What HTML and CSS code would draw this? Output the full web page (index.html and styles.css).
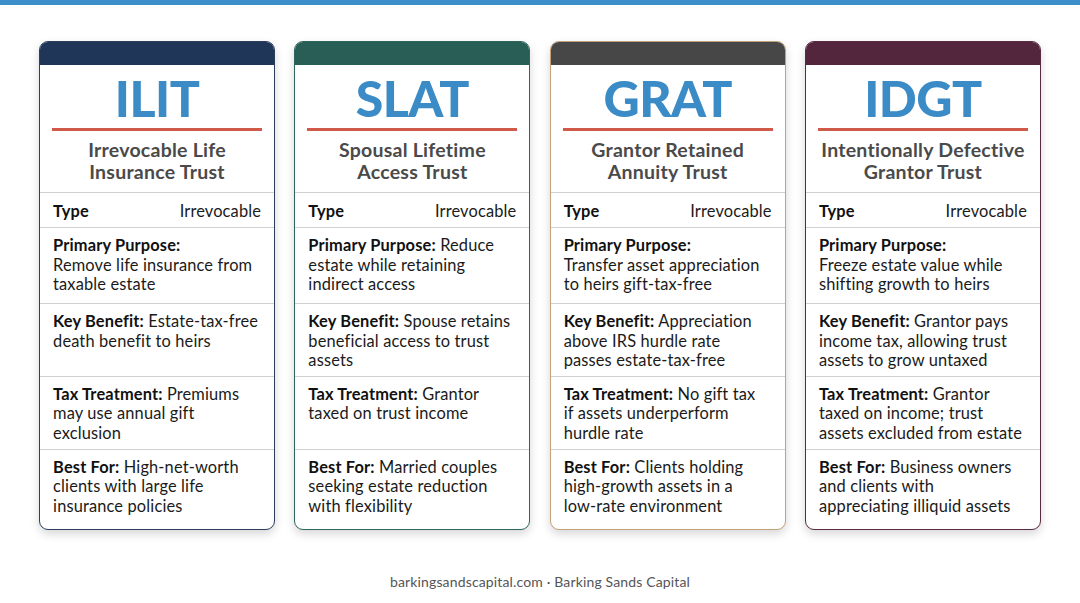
FILE: index.html
```html
<!DOCTYPE html>
<html lang="en">
<head>
<meta charset="utf-8">
<title>Trust Comparison</title>
<link rel="stylesheet" href="styles.css">
</head>
<body>
<div class="topbar"></div>
<main class="cards">
  <section class="card c-ilit">
    <div class="card-head">
      <div class="card-bar"></div>
      <h2 class="abbr">ILIT</h2>
      <div class="rule"></div>
      <p class="full">Irrevocable Life<br>Insurance Trust</p>
    </div>
    <div class="row row-type"><b>Type</b><span>Irrevocable</span></div>
    <div class="row"><b>Primary Purpose:</b><br>Remove life insurance from taxable estate</div>
    <div class="row"><b>Key Benefit:</b> Estate-tax-free death benefit to heirs</div>
    <div class="row"><b>Tax Treatment:</b> Premiums may use annual gift exclusion</div>
    <div class="row row-last"><b>Best For:</b> High-net-worth clients with large life insurance policies</div>
  </section>
  <section class="card c-slat">
    <div class="card-head">
      <div class="card-bar"></div>
      <h2 class="abbr">SLAT</h2>
      <div class="rule"></div>
      <p class="full">Spousal Lifetime<br>Access Trust</p>
    </div>
    <div class="row row-type"><b>Type</b><span>Irrevocable</span></div>
    <div class="row"><b>Primary Purpose:</b> Reduce estate while retaining indirect access</div>
    <div class="row"><b>Key Benefit:</b> Spouse retains beneficial access to trust assets</div>
    <div class="row"><b>Tax Treatment:</b> Grantor taxed on trust income</div>
    <div class="row row-last"><b>Best For:</b> Married couples seeking estate reduction with flexibility</div>
  </section>
  <section class="card c-grat">
    <div class="card-head">
      <div class="card-bar"></div>
      <h2 class="abbr">GRAT</h2>
      <div class="rule"></div>
      <p class="full">Grantor Retained<br>Annuity Trust</p>
    </div>
    <div class="row row-type"><b>Type</b><span>Irrevocable</span></div>
    <div class="row"><b>Primary Purpose:</b><br>Transfer asset appreciation to heirs gift-tax-free</div>
    <div class="row"><b>Key Benefit:</b> Appreciation above IRS hurdle rate passes estate-tax-free</div>
    <div class="row"><b>Tax Treatment:</b> No gift tax if assets underperform hurdle rate</div>
    <div class="row row-last"><b>Best For:</b> Clients holding high-growth assets in a <span class="nb">low-rate</span> environment</div>
  </section>
  <section class="card c-idgt">
    <div class="card-head">
      <div class="card-bar"></div>
      <h2 class="abbr">IDGT</h2>
      <div class="rule"></div>
      <p class="full">Intentionally Defective<br>Grantor Trust</p>
    </div>
    <div class="row row-type"><b>Type</b><span>Irrevocable</span></div>
    <div class="row"><b>Primary Purpose:</b><br>Freeze estate value while shifting growth to heirs</div>
    <div class="row"><b>Key Benefit:</b> Grantor pays income tax, allowing trust assets to grow untaxed</div>
    <div class="row"><b>Tax Treatment:</b> Grantor taxed on income; trust assets excluded from estate</div>
    <div class="row row-last"><b>Best For:</b> Business owners and clients with appreciating illiquid assets</div>
  </section>
</main>
<footer class="footer">barkingsandscapital.com · Barking Sands Capital</footer>
</body>
</html>
```

FILE: styles.css
```css
* { box-sizing: border-box; }
html, body { margin: 0; padding: 0; }
body {
  width: 1080px;
  height: 603px;
  background: #ffffff;
  font-family: "Lato", "Open Sans", sans-serif;
  color: #1a1a1a;
  overflow: hidden;
}
.topbar {
  height: 5px;
  background: #3d8fc9;
}
.cards {
  display: grid;
  grid-template-columns: repeat(4, 236px);
  grid-template-rows: auto 35px 76px 72.5px 73px auto;
  column-gap: 19.3px;
  justify-content: center;
  padding-top: 36px;
}
.card {
  grid-row: span 6;
  display: grid;
  grid-template-rows: subgrid;
  border: 1.5px solid var(--edge);
  border-radius: 9px;
  overflow: hidden;
  background: #fff;
  box-shadow: 0 4px 10px rgba(0, 0, 0, 0.16);
}
.c-ilit { --edge: #2b3f5f; --bar: #1f3658; }
.c-slat { --edge: #2e665d; --bar: #285e55; }
.c-grat { --edge: #c3a27a; --bar: #474747; }
.c-idgt { --edge: #5a2a43; --bar: #54263e; }
.card-head {
  display: flex;
  flex-direction: column;
  align-items: center;
  padding-bottom: 9px;
  border-bottom: 1px solid #d0d0d0;
}
.card-bar {
  align-self: stretch;
  height: 23px;
  background: var(--bar);
}
.abbr {
  margin: 7px 0 0;
  font-size: 50px;
  line-height: 52px;
  font-weight: 900;
  letter-spacing: -0.5px;
  color: #3b8bc6;
}
.rule {
  align-self: stretch;
  height: 3px;
  margin: 4px 12px 0;
  background: #d05a4a;
}
.full {
  margin: 8px 0 0;
  font-size: 19.5px;
  line-height: 22px;
  font-weight: 700;
  letter-spacing: 0.25px;
  color: #4a4a4a;
  text-align: center;
}
.row {
  padding: 7px 15px 6px 13px;
  font-size: 16.4px;
  line-height: 19.7px;
  letter-spacing: 0.15px;
  border-bottom: 1px solid #d0d0d0;
}
.row b { font-weight: 700; color: #111; }
.nb { white-space: nowrap; }
.row-type {
  display: flex;
  justify-content: space-between;
  align-items: center;
  padding-right: 13px;
}
.row-last {
  border-bottom: none;
  padding-bottom: 13px;
}
.footer {
  margin-top: 42px;
  text-align: center;
  font-size: 14px;
  line-height: 20px;
  letter-spacing: 0.15px;
  color: #555;
}
```
